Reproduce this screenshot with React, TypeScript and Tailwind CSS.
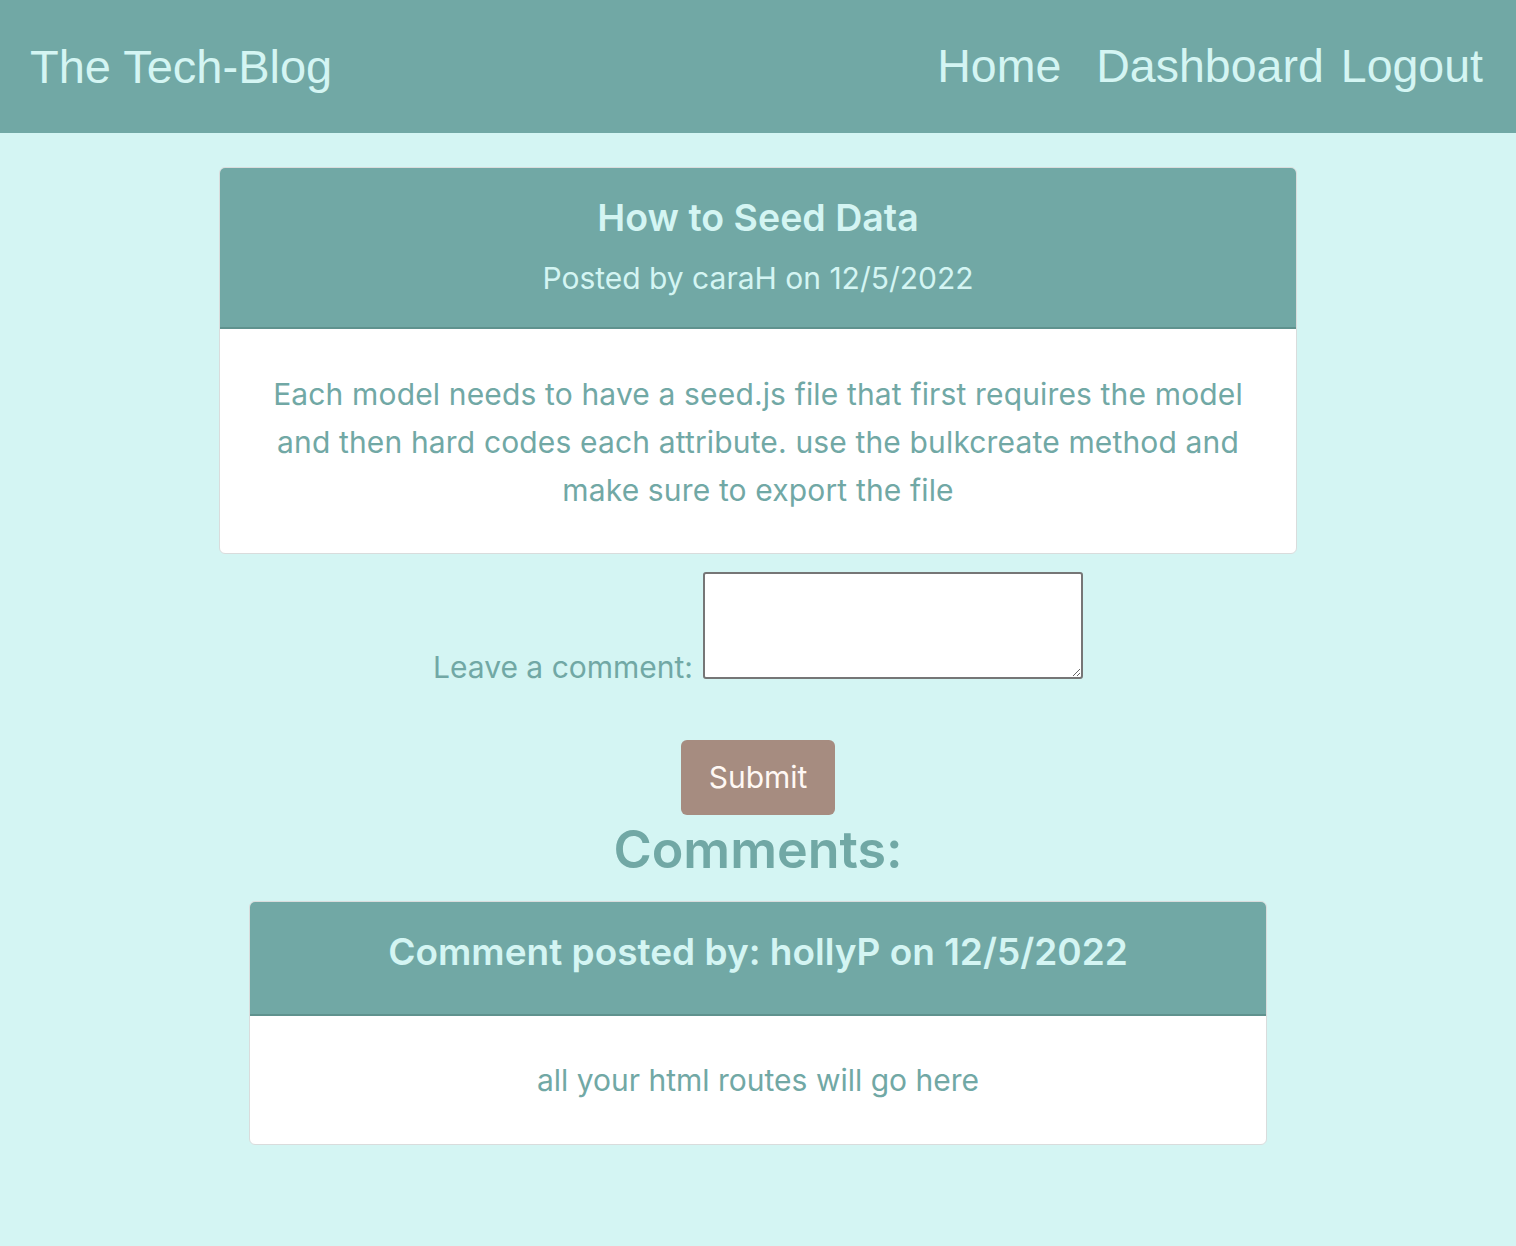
import React from "react";

export default function App() {
  return (
    <div className="min-h-[1246px] bg-[#d4f5f3] font-['Inter',sans-serif]">
      {/* Navbar */}
      <header className="h-[133px] bg-[#71a8a5] flex items-center justify-between pl-[30px] pr-[33px] font-['Liberation_Sans',Arial,sans-serif] text-[#d4f5f3]">
        <h1 className="text-[47px] leading-none">The Tech-Blog</h1>
        <nav className="flex items-center text-[46.5px] leading-none">
          <a href="#" className="mr-[35px]">Home</a>
          <a href="#" className="mr-[17px]">Dashboard</a>
          <a href="#">Logout</a>
        </nav>
      </header>

      <main className="flex flex-col items-center">
        {/* Post card */}
        <article className="mt-[34px] w-[1078px] rounded-[6px] border border-[#d9dcdc] overflow-hidden bg-white">
          <div className="h-[161px] bg-[#71a8a5] border-b-2 border-[#5f928e] flex flex-col items-center justify-center gap-[18px] text-[#d4f5f3]">
            <h2 className="text-[37.5px] leading-[43px] font-semibold">How to Seed Data</h2>
            <p className="text-[30px] leading-[42px]">Posted by caraH on 12/5/2022</p>
          </div>
          <div className="px-[40px] pt-[41px] pb-[39px] text-center text-[30px] leading-[48px] tracking-[0.15px] text-[#71a8a5]">
            Each model needs to have a seed.js file that first requires the model and then hard codes each attribute. use the bulkcreate method and make sure to export the file
          </div>
        </article>

        {/* Comment form */}
        <form className="flex flex-col items-center">
          <div className="mt-[18px] flex items-end gap-[10px]">
            <label className="text-[30px] leading-none text-[#71a8a5] mb-[-3px]">Leave a comment:</label>
            <textarea className="w-[380px] h-[107px] bg-white border-2 border-[#767676] rounded-[3px] resize" />
          </div>
          <button
            type="button"
            className="mt-[61px] w-[154px] h-[75px] rounded-[6px] bg-[#a68c80] text-[30px] text-[#fff8f4]"
          >
            Submit
          </button>
        </form>

        <h2 className="mt-[4px] text-[52px] leading-[62px] font-semibold text-[#71a8a5]">Comments:</h2>

        {/* Comment card */}
        <article className="mt-[20px] w-[1018px] rounded-[6px] border border-[#d9dcdc] overflow-hidden bg-white">
          <div className="h-[114px] bg-[#71a8a5] border-b-2 border-[#5f928e] flex items-center justify-center pb-[14px] text-[#d4f5f3]">
            <h3 className="text-[37px] leading-none font-semibold">Comment posted by: hollyP on 12/5/2022</h3>
          </div>
          <div className="h-[128px] flex items-center justify-center text-[30px] text-[#71a8a5]">
            all your html routes will go here
          </div>
        </article>
      </main>
    </div>
  );
}
